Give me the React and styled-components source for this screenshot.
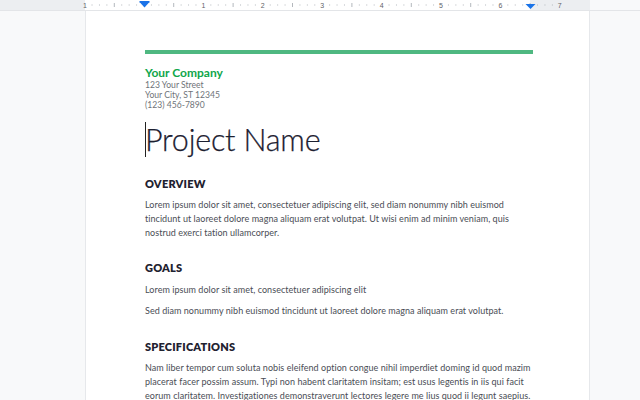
import React from "react";
import styled, { createGlobalStyle } from "styled-components";

const Global = createGlobalStyle`
  html, body { margin: 0; padding: 0; background: #f8f9fa; }
  body { font-family: Lato, "Open Sans", sans-serif; }
`;

const Shell = styled.div`
  width: 640px;
  height: 400px;
  overflow: hidden;
  display: flex;
  flex-direction: column;
  background: #f8f9fa;
`;

const Ruler = styled.div`
  height: 10px;
  flex: none;
  display: grid;
  grid-template-columns: 85px 445px 60px 1fr;
  background: #eceef1;
  border-bottom: 1px solid #e3e5e8;
  position: relative;
`;

const RulerZone = styled.div`
  background: ${(p) => (p.$light ? "#f8f9fa" : p.$white ? "#ffffff" : "#eceef1")};
`;

const Ticks = styled.svg`
  position: absolute;
  left: 0;
  top: 0;
`;

const Workspace = styled.div`
  flex: 1;
  display: flex;
  padding-left: 85px;
`;

const Page = styled.div`
  width: 505px;
  background: #fff;
  border-left: 1px solid #e6e8eb;
  border-right: 1px solid #e6e8eb;
  padding: 39px 58px 0 59px;
  box-sizing: border-box;
`;

const Rule = styled.div`
  height: 4px;
  background: #4fb881;
  margin-right: -2px;
`;

const Company = styled.div`
  margin-top: 12px;
  color: #0ea64a;
  font-weight: 700;
  font-size: 12px;
  line-height: 14px;
`;

const Address = styled.div`
  color: #6f7479;
  font-size: 8.6px;
  line-height: 10px;
`;

const Title = styled.h1`
  margin: 10px 0 0 0;
  font-weight: 300;
  font-size: 30.5px;
  line-height: 38px;
  color: #1c2030;
  position: relative;
  letter-spacing: -0.2px;
  -webkit-text-stroke: 0.25px #1c2030;
`;

const Caret = styled.span`
  position: absolute;
  left: 0;
  top: 2px;
  width: 1px;
  height: 35px;
  background: #222;
`;

const Heading = styled.h2`
  margin: ${(p) => p.$top}px 0 0 0;
  font-size: 11px;
  font-weight: 800;
  line-height: 14px;
  color: #1f2230;
  letter-spacing: 0.2px;
`;

const Para = styled.p`
  margin: ${(p) => p.$top}px 0 0 0;
  font-size: 9px;
  line-height: 14px;
  color: #4a4d55;
  letter-spacing: 0.05px;
`;

function RulerMarks() {
  const items = [];
  const inch = 59.4;
  const origin = 144;
  for (let i = -7; i <= 56; i++) {
    const x = origin + (i * inch) / 8;
    if (x < 80 || x > 592) continue;
    if (i % 8 === 0) {
      const n = i / 8;
      const label = n === 0 ? null : String(Math.abs(n));
      if (label) {
        items.push(
          <text key={"t" + i} x={x} y={8} fontSize="7" textAnchor="middle" fill="#5f6368" fontFamily="Liberation Sans, sans-serif">{label}</text>
        );
      }
    } else if (i % 4 === 0) {
      items.push(<rect key={"h" + i} x={x - 0.5} y={3} width={1} height={4} fill="#b4b8bd" />);
    } else {
      items.push(<rect key={"d" + i} x={x - 0.5} y={4.5} width={1} height={1} fill="#b4b8bd" />);
    }
  }
  return (
    <Ticks width="640" height="10" viewBox="0 0 640 10">
      <text x={85} y={8} fontSize="7" textAnchor="middle" fill="#5f6368" fontFamily="Liberation Sans, sans-serif">1</text>
      {items}
      <path d="M139.5 2 H149.5 L144.5 7.5 Z" fill="#1a73e8" />
      <rect x={139.5} y={1} width={10} height={1.5} fill="#1a73e8" />
      <path d="M525.5 4 H535.5 L530.5 9 Z" fill="#1a73e8" />
    </Ticks>
  );
}

export default function App() {
  return (
    <Shell>
      <Global />
      <Ruler>
        <RulerZone />
        <RulerZone $white />
        <RulerZone />
        <RulerZone $light />
        <RulerMarks />
      </Ruler>
      <Workspace>
        <Page>
          <Rule />
          <Company>Your Company</Company>
          <Address>123 Your Street</Address>
          <Address>Your City, ST 12345</Address>
          <Address>(123) 456-7890</Address>
          <Title>
            <Caret />
            Project Name
          </Title>
          <Heading $top={19}>OVERVIEW</Heading>
          <Para $top={7}>
            Lorem ipsum dolor sit amet, consectetuer adipiscing elit, sed diam nonummy nibh euismod tincidunt ut laoreet dolore magna aliquam erat volutpat. Ut wisi enim ad minim veniam, quis nostrud exerci tation ullamcorper.
          </Para>
          <Heading $top={21}>GOALS</Heading>
          <Para $top={8}>Lorem ipsum dolor sit amet, consectetuer adipiscing elit</Para>
          <Para $top={7}>Sed diam nonummy nibh euismod tincidunt ut laoreet dolore magna aliquam erat volutpat.</Para>
          <Heading $top={22}>SPECIFICATIONS</Heading>
          <Para $top={7}>
            Nam liber tempor cum soluta nobis eleifend option congue nihil imperdiet doming id quod mazim placerat facer possim assum. Typi non habent claritatem insitam; est usus legentis in iis qui facit eorum claritatem. Investigationes demonstraverunt lectores legere me lius quod ii legunt saepius.
          </Para>
        </Page>
      </Workspace>
    </Shell>
  );
}
